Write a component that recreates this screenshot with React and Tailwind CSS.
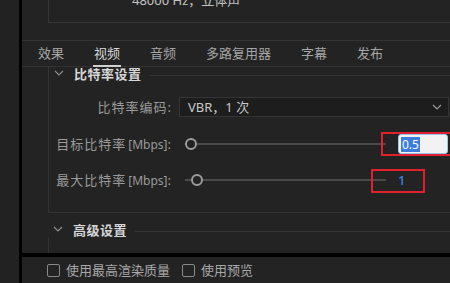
import React from 'react';

const font = "font-['Noto_Sans','Noto_Sans_CJK_SC',sans-serif]";

const Chevron = ({ className = '' }) => (
  <svg width="10" height="6" viewBox="0 0 10 6" className={className}>
    <path d="M1 1 L5 5 L9 1" fill="none" stroke="currentColor" strokeWidth="1.2" />
  </svg>
);

const SectionHeader = ({ title }) => (
  <div className="flex items-center h-[14px] pl-[5px]">
    <Chevron className="text-[#8c8c8c] mt-[-2px]" />
    <span className="ml-[10px] text-[13px] font-bold text-[#d6d6d6] leading-none tracking-[0.5px]">{title}</span>
    <div className="flex-1 h-px bg-[#343434] ml-[8px] mt-[2px]" />
  </div>
);

const Slider = ({ lead = 0 }) => (
  <div className="flex items-center w-[201px]">
    {lead > 0 && <div className="h-[2px] bg-[#4a4a4a]" style={{ width: lead }} />}
    <div className="w-[12px] h-[12px] rounded-full border-[2px] border-[#9c9c9c] bg-[#232323] shrink-0" />
    <div className="flex-1 h-[2px] bg-[#4a4a4a]" />
  </div>
);

const Label = ({ main, unit }) => (
  <div className="w-[122px] text-right text-[#9a9a9a] text-[13px] leading-none whitespace-nowrap">
    <span className="tracking-[1px]">{main}</span>
    {unit && <span className="text-[12px] ml-[2px]">{unit}</span>}
    :
  </div>
);

const tabs = ['效果', '视频', '音频', '多路复用器', '字幕', '发布'];

export default function App() {
  return (
    <div className={`flex w-[450px] h-[283px] bg-[#232323] overflow-hidden ${font}`}>
      {/* Left strip */}
      <div className="w-[19px] bg-[#222222]" />
      <div className="w-[3px] bg-black" />

      <div className="flex-1 flex flex-col min-w-0">
        {/* Top summary box (scrolled) */}
        <div className="h-[40px] shrink-0">
          <div className="ml-[26px] h-[23px] border-l border-b border-[#363636] overflow-hidden">
            <div className="pl-[83px] mt-[-8px] text-[13px] leading-[16px] text-[#c4c4c4] whitespace-nowrap">
              48000 Hz，立体声
            </div>
          </div>
        </div>

        {/* Tabs */}
        <div className="h-[27px] shrink-0 border-t border-b border-[#333333] flex items-stretch pl-[16px] gap-[30px]">
          {tabs.map((t, i) => (
            <div key={t} className="relative flex items-center">
              <span className={`text-[13px] leading-none ${i === 1 ? 'text-[#d8d8d8]' : 'text-[#a6a6a6]'}`}>{t}</span>
              {i === 1 && <div className="absolute left-[-1px] right-[-1px] bottom-[-1px] h-[2px] bg-[#d0d0d0]" />}
            </div>
          ))}
        </div>

        {/* Content */}
        <div className="flex-1 pl-[26px] flex flex-col">
          <div className="border-l border-b border-[#343434] pb-[22px]">
            <SectionHeader title="比特率设置" />

            <div className="flex items-center mt-[16px] h-[20px]">
              <Label main="比特率编码" />
              <div className="ml-[8px] w-[270px] h-[20px] bg-[#1d1d1d] border border-[#343434] flex items-center pl-[8px] pr-[6px]">
                <span className="text-[13px] text-[#c8c8c8] leading-none">VBR，1 次</span>
                <Chevron className="ml-auto text-[#9a9a9a]" />
              </div>
            </div>

            <div className="relative flex items-center mt-[17px] h-[20px]">
              <Label main="目标比特率" unit="[Mbps]" />
              <div className="ml-[14px]"><Slider /></div>
              <div className="ml-[12px] w-[50px] h-[20px] rounded-[3px] bg-[#f2f2f2] border border-[#9cc4f0] flex items-center pl-[2px]">
                <span className="bg-[#3b7ddd] text-white text-[12px] leading-[15px] px-[1px]">0.5</span>
              </div>
              <div className="absolute left-[332px] top-[-2px] w-[80px] h-[24px] border-2 border-[#e2202c]" />
            </div>

            <div className="relative flex items-center mt-[16px] h-[20px]">
              <Label main="最大比特率" unit="[Mbps]" />
              <div className="ml-[14px]"><Slider lead={6} /></div>
              <span className="ml-[12px] text-[13px] font-medium text-[#3a84e6] leading-none">1</span>
              <div className="absolute left-[322px] top-[-1px] w-[54px] h-[24px] border-2 border-[#e2202c]" />
            </div>
          </div>

          <div className="mt-[10px]">
            <SectionHeader title="高级设置" />
          </div>
          <div className="flex-1 border-l border-[#343434]" />
        </div>

        <div className="h-[4px] bg-black shrink-0" />

        {/* Bottom options */}
        <div className="h-[26px] shrink-0 flex items-center pl-[25px]">
          <label className="flex items-center">
            <span className="w-[13px] h-[13px] border-[1.5px] border-[#8a8a8a] rounded-[2px]" />
            <span className="ml-[6px] text-[13px] text-[#a8a8a8] leading-none">使用最高渲染质量</span>
          </label>
          <label className="flex items-center ml-[12px]">
            <span className="w-[13px] h-[13px] border-[1.5px] border-[#8a8a8a] rounded-[2px]" />
            <span className="ml-[6px] text-[13px] text-[#a8a8a8] leading-none">使用预览</span>
          </label>
        </div>
      </div>
    </div>
  );
}
